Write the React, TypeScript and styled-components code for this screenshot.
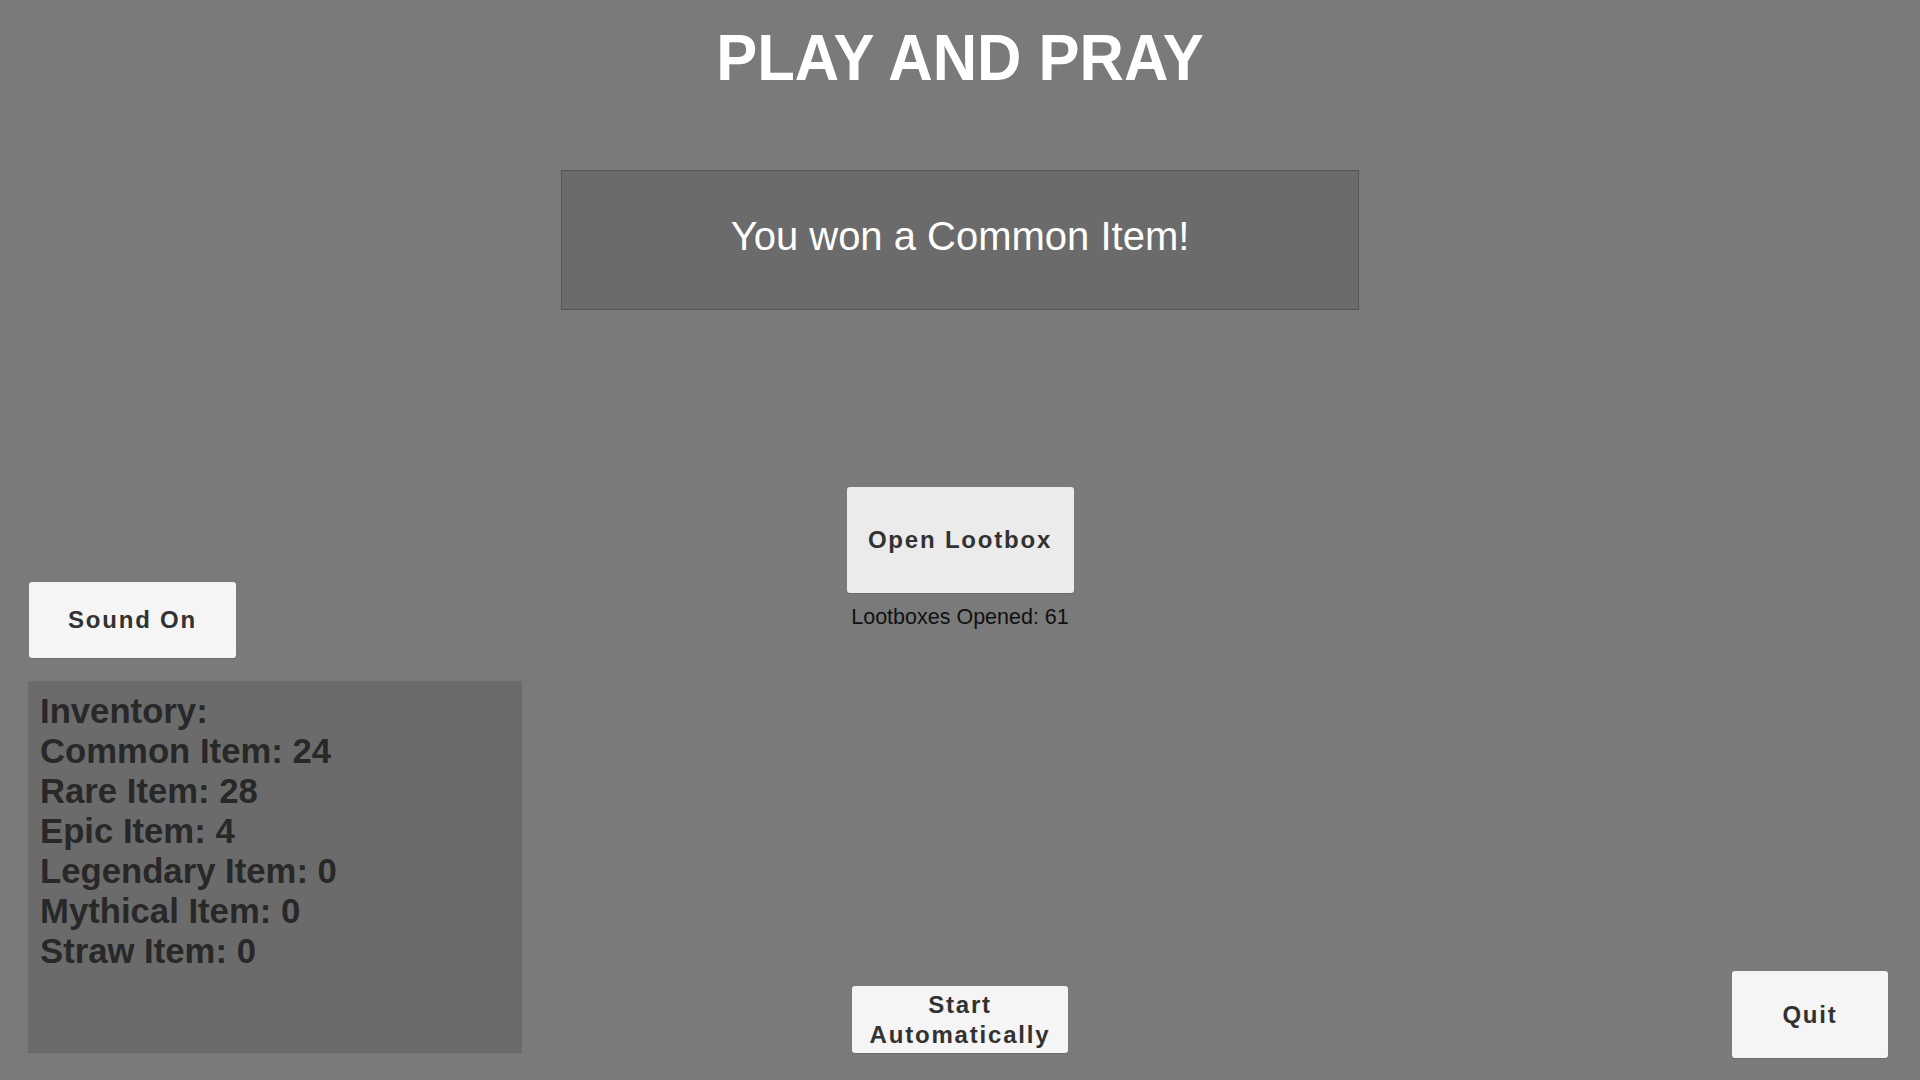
import React from 'react';
import styled, { createGlobalStyle } from 'styled-components';

const GlobalStyle = createGlobalStyle`
  html, body {
    margin: 0;
    padding: 0;
    background: #7a7a7a;
    font-family: "Liberation Sans", Arial, sans-serif;
  }
`;

const Screen = styled.div`
  width: 1920px;
  height: 1080px;
  display: grid;
  grid-template-columns: 1fr 800px 1fr;
  overflow: hidden;
`;

const LeftColumn = styled.div`
  display: flex;
  flex-direction: column;
  justify-content: flex-end;
  align-items: flex-start;
  padding: 0 0 27px 28px;
`;

const CenterColumn = styled.div`
  display: flex;
  flex-direction: column;
  align-items: center;
  padding-bottom: 27px;
`;

const RightColumn = styled.div`
  display: flex;
  justify-content: flex-end;
  align-items: flex-end;
  padding: 0 32px 22px 0;
`;

// the game renders its title a bit taller than plain Arial
const Title = styled.h1`
  margin: 26px 0 0;
  font-size: 61.5px;
  line-height: 60px;
  font-weight: 700;
  color: #ffffff;
  white-space: nowrap;
  transform: scaleY(1.06);
  transform-origin: top center;
`;

const MessageBox = styled.div`
  box-sizing: border-box;
  width: 798px;
  height: 140px;
  margin-top: 84px;
  padding-bottom: 7px;
  display: flex;
  align-items: center;
  justify-content: center;
  background: #6b6b6b;
  border: 1px solid #565656;
  color: #ffffff;
  font-size: 40px;
`;

const Button = styled.button<{ $w: number; $h: number; $bg?: string }>`
  box-sizing: border-box;
  width: ${p => p.$w}px;
  height: ${p => p.$h}px;
  padding: 0;
  border: none;
  border-radius: 3px;
  background: ${p => p.$bg || '#f5f5f5'};
  box-shadow: 0 1px 0 rgba(0, 0, 0, 0.12);
  color: #323232;
  font-family: "Liberation Sans", Arial, sans-serif;
  font-weight: 700;
  font-size: 24px;
  letter-spacing: 1.8px;
  line-height: 30px;
  text-align: center;
  cursor: pointer;
`;

const SoundButton = styled(Button)`
  margin-left: 1px;
`;

const OpenButton = styled(Button)`
  margin-top: 177px;
`;

const Counter = styled.div`
  margin-top: 14px;
  font-size: 21.5px;
  line-height: 21px;
  color: #111111;
`;

const Spacer = styled.div`
  flex: 1;
`;

const Inventory = styled.div`
  box-sizing: border-box;
  width: 494px;
  height: 372px;
  margin-top: 23px;
  padding: 10px 12px;
  background: #6b6b6b;
  border-bottom: 1px solid #666666;
`;

const InventoryLine = styled.div`
  font-size: 34.7px;
  line-height: 40px;
  font-weight: 700;
  color: #282828;
  white-space: nowrap;
`;

const items: [string, number][] = [
  ['Common Item', 24],
  ['Rare Item', 28],
  ['Epic Item', 4],
  ['Legendary Item', 0],
  ['Mythical Item', 0],
  ['Straw Item', 0],
];

function App() {
  return (
    <>
      <GlobalStyle />
      <Screen>
        <LeftColumn>
          <SoundButton $w={207} $h={76}>Sound On</SoundButton>
          <Inventory>
            <InventoryLine>Inventory:</InventoryLine>
            {items.map(([name, count]) => (
              <InventoryLine key={name}>{name}: {count}</InventoryLine>
            ))}
          </Inventory>
        </LeftColumn>

        <CenterColumn>
          <Title>PLAY AND PRAY</Title>
          <MessageBox>You won a Common Item!</MessageBox>
          <OpenButton $w={227} $h={106} $bg="#ebebeb">
            Open Lootbox
          </OpenButton>
          <Counter>Lootboxes Opened: 61</Counter>
          <Spacer />
          <Button $w={216} $h={67}>
            Start
            <br />
            Automatically
          </Button>
        </CenterColumn>

        <RightColumn>
          <Button $w={156} $h={87}>Quit</Button>
        </RightColumn>
      </Screen>
    </>
  );
}

export default App;
